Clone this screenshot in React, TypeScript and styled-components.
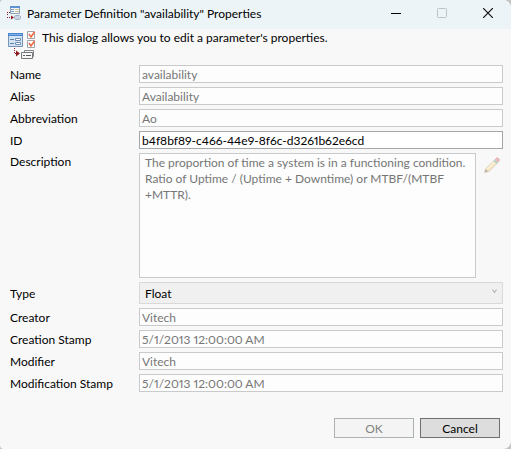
import React from "react";
import styled, { createGlobalStyle, css } from "styled-components";

const GlobalStyle = createGlobalStyle`
  *, *::before, *::after { box-sizing: border-box; }
  body {
    margin: 0;
    background: #c4c4c4;
    color: #000;
    font-family: Lato, "Open Sans", sans-serif;
    font-size: 12px;
    font-variant-numeric: proportional-nums;
    line-height: 16px;
  }
  button, input, textarea, select { font: inherit; border-radius: 0; margin: 0; }
`;

const Dialog = styled.div`
  display: flex;
  flex-direction: column;
  min-height: 100vh;
  background: #f8f8f8;
  border-radius: 4px 8px 8px 4px;
  overflow: hidden;
`;

const TitleBar = styled.header`
  display: flex;
  align-items: flex-start;
  height: 29px;
  padding-left: 6px;
  background: #ecf4f7;
  > svg { margin-top: 6px; }
`;

const Title = styled.h1`
  flex: 1;
  margin: 6px 0 0 5px;
  font-size: 12px;
  font-weight: 400;
  white-space: nowrap;
`;

const WindowButton = styled.button`
  display: flex;
  align-items: center;
  justify-content: center;
  width: 46px;
  height: 26px;
  padding: 0;
  border: 0;
  background: transparent;
`;

const Intro = styled.div`
  display: flex;
  height: 36px;
  padding: 1px 8px 0 7px;
`;

const IntroText = styled.p`
  margin: 0 0 0 6px;
  white-space: nowrap;
`;

const Form = styled.form`
  flex: 1;
  display: flex;
  flex-direction: column;
`;

const Fields = styled.div`
  display: grid;
  grid-template-columns: 125px 1fr;
  gap: 4px;
  padding: 0 8px 0 10px;
`;

const labelTop = { line: 2, block: 1, select: 4 };

const Label = styled.label<{ $for?: keyof typeof labelTop }>`
  padding-top: ${(p) => labelTop[p.$for ?? "line"]}px;
  white-space: nowrap;
`;

const fieldBox = css`
  width: 100%;
  border: 1px solid #c9cacc;
  background: #fdfdfd;
  color: #767676;
  outline: 0;
`;

const TextInput = styled.input`
  ${fieldBox}
  height: 18px;
  padding: 0 2px;
  line-height: 16px;
  &:enabled {
    border-color: #a5a6aa;
    background: #fff;
    color: #000;
  }
`;

const DescriptionRow = styled.div`
  display: flex;
  align-items: flex-start;
`;

const TextArea = styled.textarea`
  ${fieldBox}
  display: block;
  flex: 1;
  min-width: 0;
  height: 125px;
  padding: 1px 0 0 5px;
  resize: none;
  overflow: hidden;
  white-space: pre;
`;

const EditButton = styled.button`
  width: 27px;
  height: 20px;
  padding: 4px 3px 0 8px;
  border: 0;
  background: transparent;
  svg { display: block; }
`;

const SelectWrap = styled.div`
  display: grid;
  align-items: center;
  > * { grid-area: 1 / 1; }
  svg { justify-self: end; margin: 0 6px 4px 0; pointer-events: none; }
`;

const Select = styled.select`
  appearance: none;
  width: 100%;
  height: 22px;
  padding: 1px 20px 0 5px;
  border: 1px solid #d9d9d9;
  background: #f0f0f0;
  color: #000;
  opacity: 1;
`;

const Actions = styled.footer`
  display: flex;
  justify-content: flex-end;
  gap: 6px;
  margin-top: auto;
  padding: 16px 11px 11px;
`;

const ActionButton = styled.button`
  width: 80px;
  height: 20px;
  padding: 1px 0 0;
  border: 1px solid #707070;
  background: #ddd;
  color: #000;
  line-height: 16px;
  &:disabled {
    border-color: #adb2b5;
    background: #f4f4f4;
    color: #838383;
  }
`;

const AppIcon = () => (
  <svg width="16" height="16" viewBox="0 0 16 16" aria-hidden="true">
    <path d="M4.500 .5h9v7h-9z" fill="#eef3f8" stroke="#8fa3b8" />
    <path d="M4 0h10v2H4z" fill="#5b93d3" />
    <path d="M5 3h3v1H5zM5 5h3v1H5z" fill="#8aa2c0" />
    <path d="M9 3h4v1H9zM9 5h4v1H9z" fill="#d2c698" />
    <path d="M1 6h1v1H1zM3 6h1v1H3zM1 8h1v1H1zM1 11h1v1H1zM3 11h1v1H3z" fill="#8a1c22" />
    <path d="M5 9.500l3 2-3 2z" fill="#8a1c22" />
    <path d="M9.500 9.500h4l1 1v2l-1 1h-4l-1-1v-2z" fill="#cdd7e3" stroke="#9fb0c2" />
  </svg>
);

const PropertiesIcon = () => (
  <svg width="29" height="30" viewBox="0 0 29 30" aria-hidden="true">
    <path d="M1.500 3.500h14v13h-14z" fill="#d3e3f5" stroke="#7390b5" />
    <path d="M1 3h15v3H1z" fill="#4a86d0" />
    <path d="M2 4h13v1H2z" fill="#7fb0e8" />
    <path d="M3 9h4v1H3zM3 13h4v1H3z" fill="#5f7fa4" />
    <path d="M8.500 8.500h5v2h-5zM8.500 12.500h5v2h-5z" fill="#fff" stroke="#7590b0" />
    <path d="M20.500 1.500h7v7h-7zM20.500 10.500h7v7h-7z" fill="#fff" stroke="#a2a4a8" />
    <path d="M22 4l2 3 3.500-5M22 13l2 3 3.500-5" fill="none" stroke="#ee6540" strokeWidth="1.500" />
    <path d="M7 18h1v1H7zM7 20h1v1H7zM7 22h1v1H7zM8 23h1v1H8z" fill="#8a1c22" />
    <path d="M9 20.500l4 3-4 3z" fill="#8a1c22" />
    <path d="M17.500 20.500h9v6h-9z" fill="#f4f4f4" stroke="#85888c" />
    <path d="M14.500 22.500h11v6h-11z" fill="#f7f7f7" stroke="#74777b" />
    <path d="M16 25h2v1h-2zM19 25h5v1h-5z" fill="#55585c" />
  </svg>
);

const PencilIcon = () => (
  <svg width="16" height="16" viewBox="0 0 16 16" aria-hidden="true">
    <path d="M.5 15.500l1.500-4 9-9 3 3-9 9z" fill="#f6e5c6" stroke="#d5c7ae" strokeWidth=".7" />
    <path d="M3 12.500l9-9" stroke="#fff3d8" strokeWidth="1.300" />
    <path d="M.5 15.500l1.200-3.500 2.500 2.300z" fill="#b9b2aa" />
    <path d="M9.500 4l3 3 1.300-1.300-3-3z" fill="#b2cfc7" />
    <path d="M11.200 2.300l1.600-1.500c.8-.7 3.500 1.700 2.700 2.700L14 5z" fill="#ecbcc0" stroke="#d9a5aa" strokeWidth=".5" />
  </svg>
);

interface RowProps {
  id: string;
  label: string;
  value: string;
  editable?: boolean;
}

const TextRow = ({ id, label, value, editable = false }: RowProps) => (
  <>
    <Label htmlFor={id}>{label}</Label>
    <TextInput id={id} type="text" defaultValue={value} disabled={!editable} spellCheck={false} />
  </>
);

const description =
  "The proportion of time a system is in a functioning condition.\nRatio of Uptime / (Uptime + Downtime) or MTBF/(MTBF\n+MTTR).";

export default function App() {
  return (
    <>
      <GlobalStyle />
      <Dialog role="dialog" aria-labelledby="dialog-title">
        <TitleBar>
          <AppIcon />
          <Title id="dialog-title">Parameter Definition "availability" Properties</Title>
          <WindowButton type="button" aria-label="Minimize">
            <svg width="10" height="10" viewBox="0 0 10 10"><path d="M0 5h10v1H0z" /></svg>
          </WindowButton>
          <WindowButton type="button" aria-label="Maximize" disabled>
            <svg width="10" height="10" viewBox="0 0 10 10">
              <rect x=".5" y=".5" width="9" height="9" rx="1" fill="none" stroke="#bcc2c5" />
            </svg>
          </WindowButton>
          <WindowButton type="button" aria-label="Close">
            <svg width="10" height="10" viewBox="0 0 10 10"><path d="M0 0l10 10M10 0L0 10" stroke="#111" strokeWidth="1.200" /></svg>
          </WindowButton>
        </TitleBar>
        <Intro>
          <PropertiesIcon />
          <IntroText>This dialog allows you to edit a parameter's properties.</IntroText>
        </Intro>
        <Form onSubmit={(e) => e.preventDefault()}>
          <Fields>
            <TextRow id="name" label="Name" value="availability" />
            <TextRow id="alias" label="Alias" value="Availability" />
            <TextRow id="abbreviation" label="Abbreviation" value="Ao" />
            <TextRow id="identifier" label="ID" value="b4f8bf89-c466-44e9-8f6c-d3261b62e6cd" editable />
            <Label htmlFor="description" $for="block">Description</Label>
            <DescriptionRow>
              <TextArea id="description" defaultValue={description} disabled />
              <EditButton type="button" aria-label="Edit description" disabled>
                <PencilIcon />
              </EditButton>
            </DescriptionRow>
            <Label htmlFor="type" $for="select">Type</Label>
            <SelectWrap>
              <Select id="type" defaultValue="Float" disabled>
                <option>Float</option>
              </Select>
              <svg width="5" height="5" viewBox="0 0 5 5" aria-hidden="true">
                <path d="M.5 .5l2 3 2-3" fill="none" stroke="#b5b5b5" strokeWidth="1.200" />
              </svg>
            </SelectWrap>
            <TextRow id="creator" label="Creator" value="Vitech" />
            <TextRow id="creation-stamp" label="Creation Stamp" value="5/1/2013 12:00:00 AM" />
            <TextRow id="modifier" label="Modifier" value="Vitech" />
            <TextRow id="modification-stamp" label="Modification Stamp" value="5/1/2013 12:00:00 AM" />
          </Fields>
          <Actions>
            <ActionButton type="submit" disabled>OK</ActionButton>
            <ActionButton type="button">Cancel</ActionButton>
          </Actions>
        </Form>
      </Dialog>
    </>
  );
}
